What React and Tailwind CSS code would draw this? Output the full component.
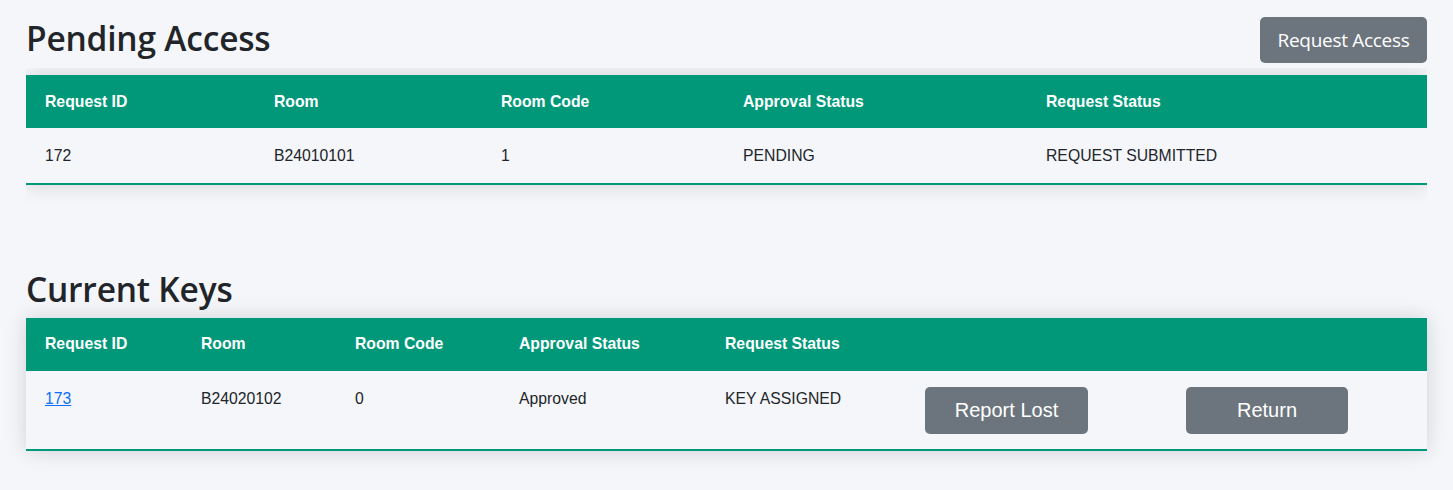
import React from "react";

const pending = [
  { id: "172", room: "B24010101", code: "1", approval: "PENDING", status: "REQUEST SUBMITTED" },
];

const current = [
  { id: "173", room: "B24020102", code: "0", approval: "Approved", status: "KEY ASSIGNED" },
];

function Btn({ children, className }) {
  return (
    <button
      className={
        "bg-[#6c757d] text-white rounded-[5px] leading-none " + (className || "")
      }
    >
      {children}
    </button>
  );
}

export default function App() {
  const th = "text-left font-bold text-white px-[19px] py-0 h-[53px] align-middle";
  const td = "text-left px-[19px] text-[#212529]";

  return (
    <div className="min-h-screen bg-[#f5f6fa] px-[26px] pt-[17px] pb-10 text-[15.75px] font-['Liberation_Sans',Arial,sans-serif]">
      {/* Pending Access */}
      <div className="flex justify-between items-start">
        <h2 className="font-['Open_Sans',sans-serif] font-semibold text-[33.5px] leading-none text-[#212529] tracking-[-0.2px] mt-[5px]">
          Pending Access
        </h2>
        <Btn className="font-['Open_Sans',sans-serif] text-[19px] h-[46px] w-[167px] tracking-[-0.3px]">
          Request Access
        </Btn>
      </div>

      <div className="overflow-hidden mt-[5px] pt-[7px] pb-[28px]">
        <table className="w-full border-collapse shadow-[0_0_20px_rgba(0,0,0,0.15)]">
          <thead>
            <tr className="bg-[#009879]">
              <th className={th + " w-[229px]"}>Request ID</th>
              <th className={th + " w-[227px]"}>Room</th>
              <th className={th + " w-[242px]"}>Room Code</th>
              <th className={th + " w-[303px]"}>Approval Status</th>
              <th className={th}>Request Status</th>
            </tr>
          </thead>
          <tbody>
            {pending.map((r) => (
              <tr key={r.id} className="bg-[#f5f6fa] border-b-2 border-[#009879] h-[56px]">
                <td className={td}>{r.id}</td>
                <td className={td}>{r.room}</td>
                <td className={td}>{r.code}</td>
                <td className={td}>{r.approval}</td>
                <td className={td}>{r.status}</td>
              </tr>
            ))}
          </tbody>
        </table>
      </div>

      {/* Current Keys */}
      <h2 className="font-['Open_Sans',sans-serif] font-semibold text-[33.5px] leading-none text-[#212529] tracking-[-0.2px] mt-[60px] mb-[11px]">
        Current Keys
      </h2>

      <table className="w-full border-collapse shadow-[0_0_20px_rgba(0,0,0,0.15)]">
        <thead>
          <tr className="bg-[#009879]">
            <th className={th + " w-[156px]"}>Request ID</th>
            <th className={th + " w-[154px]"}>Room</th>
            <th className={th + " w-[164px]"}>Room Code</th>
            <th className={th + " w-[206px]"}>Approval Status</th>
            <th className={th + " w-[200px]"}>Request Status</th>
            <th className={th + " w-[261px]"}></th>
            <th className={th}></th>
          </tr>
        </thead>
        <tbody>
          {current.map((r) => (
            <tr key={r.id} className="bg-[#f5f6fa] border-b-2 border-[#009879]">
              <td className={td + " align-top pt-[16px] pb-[15px]"}>
                <a href="#" className="text-[#0d6efd] underline">
                  {r.id}
                </a>
              </td>
              <td className={td + " align-top pt-[16px]"}>{r.room}</td>
              <td className={td + " align-top pt-[16px]"}>{r.code}</td>
              <td className={td + " align-top pt-[16px]"}>{r.approval}</td>
              <td className={td + " align-top pt-[16px]"}>{r.status}</td>
              <td className={td + " align-top pt-[16px] pb-[15px]"}>
                <Btn className="text-[20px] h-[47px] w-[163px]">Report Lost</Btn>
              </td>
              <td className={td + " align-top pt-[16px] pb-[15px]"}>
                <Btn className="text-[20px] h-[47px] w-[162px]">Return</Btn>
              </td>
            </tr>
          ))}
        </tbody>
      </table>
    </div>
  );
}
